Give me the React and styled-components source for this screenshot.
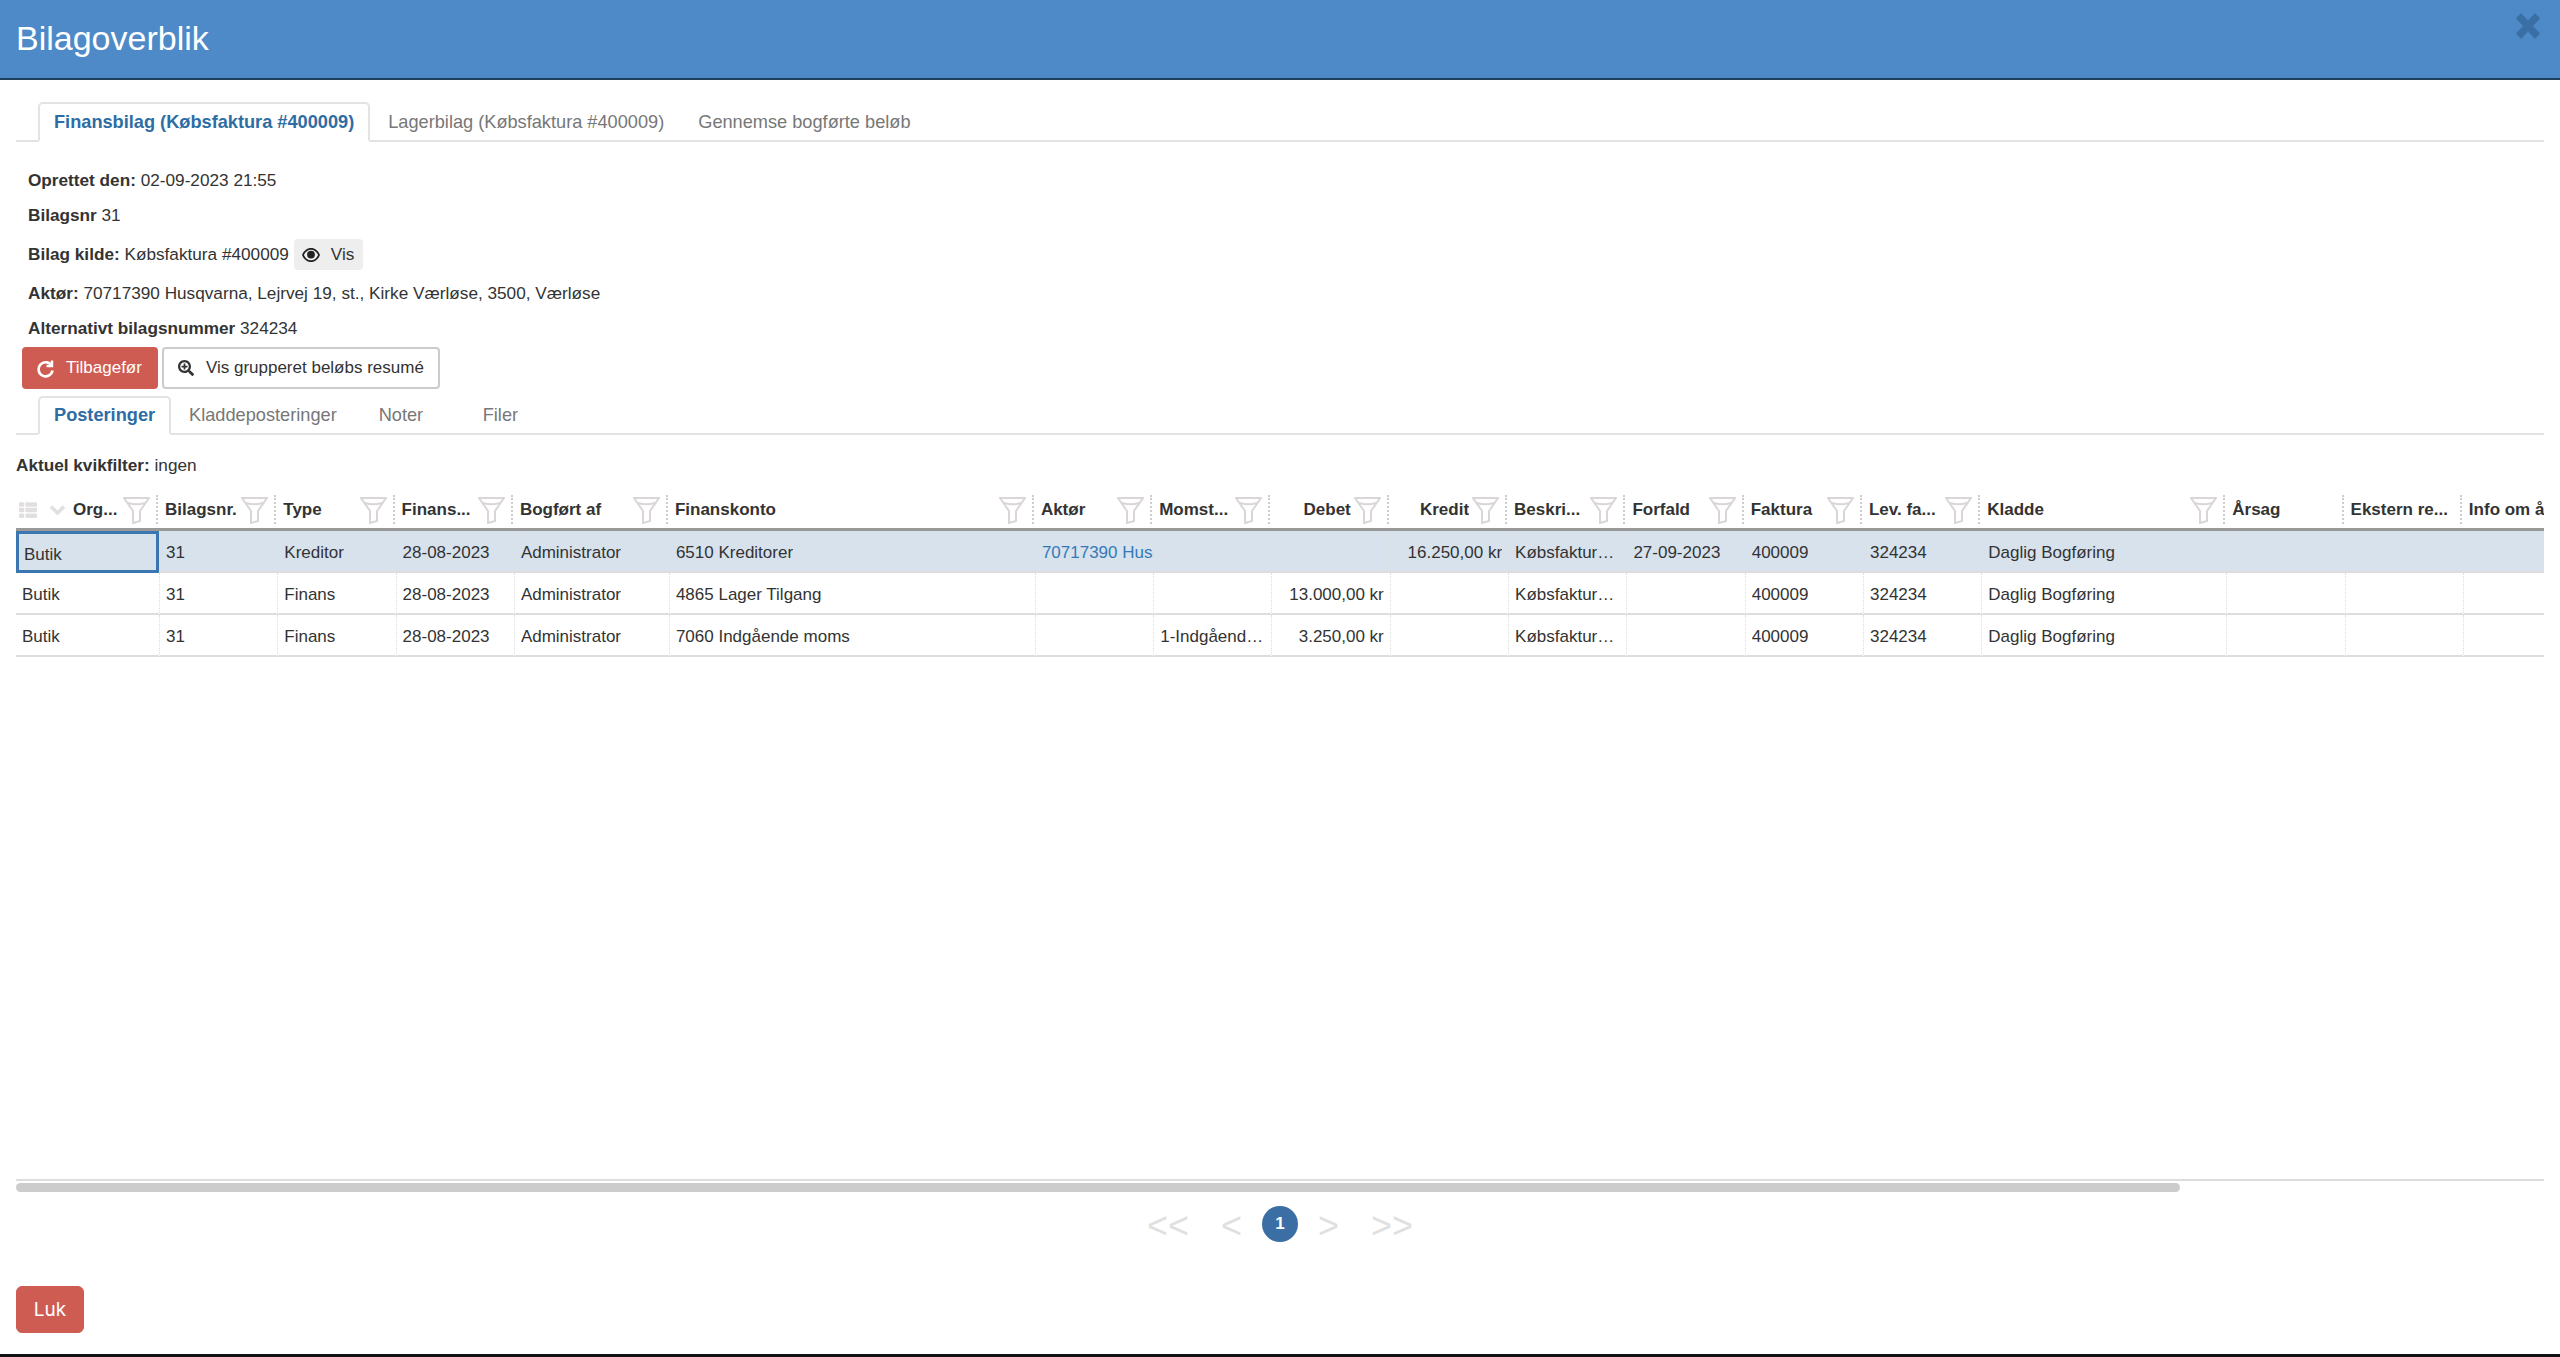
import React from 'react'
import styled, { createGlobalStyle } from 'styled-components'
import { FaSearchPlus, FaThList } from 'react-icons/fa'

const GlobalStyle = createGlobalStyle`
    html, body {
        margin: 0;
        padding: 0;
        background: #fff;
    }
    body {
        font-family: "Liberation Sans", Arial, sans-serif;
        color: #333;
    }
`

const Page = styled.div`
    height: 1357px;
    display: flex;
    flex-direction: column;
    overflow: hidden;
    border-bottom: 3px solid #111;
    box-sizing: border-box;
`

const Header = styled.header`
    height: 78px;
    flex: none;
    background: #4d8ac7;
    border-bottom: 2px solid #1f3f5f;
    display: flex;
    align-items: flex-start;
    justify-content: space-between;
    padding: 0 20px 0 16px;
`

const Title = styled.h1`
    margin: 18px 0 0;
    font-size: 34px;
    line-height: 40px;
    font-weight: 400;
    color: #fff;
`

const CloseIcon = styled.svg`
    width: 24px;
    height: 26px;
    margin-top: 13px;
    fill: #3a6fa6;
`

const Body = styled.main`
    flex: 1;
    min-height: 0;
    display: flex;
    flex-direction: column;
    padding: 0 16px;
`

const Tabs = styled.nav`
    display: flex;
    flex: none;
    height: ${props => props.$height}px;
    margin-top: ${props => props.$top}px;
    padding-left: 22px;
    border-bottom: 2px solid #e3e3e3;
    box-sizing: content-box;
`

const Tab = styled.a`
    display: flex;
    align-items: center;
    box-sizing: border-box;
    padding: 0 14px;
    margin: 0 2px -2px 0;
    font-size: 18.2px;
    color: #777;
    border: 2px solid transparent;
    border-radius: 5px 5px 0 0;
    ${props => props.$wide && `
        min-width: 102px;
        padding: 0 0 0 22px;
    `}
    ${props => props.$active && `
        color: #2e6da4;
        font-weight: 700;
        background: #fff;
        border-color: #e3e3e3;
        border-bottom-color: #fff;
    `}
`

const Info = styled.div`
    display: flex;
    flex-direction: column;
    padding: 21px 0 1px 12px;
    font-size: 17.2px;
`

const InfoRow = styled.div`
    height: ${props => props.$height || 35}px;
    display: flex;
    align-items: center;
    white-space: pre;

    b {
        font-weight: 700;
    }
`

const ViewButton = styled.span`
    display: inline-flex;
    align-items: center;
    gap: 11px;
    height: 31px;
    margin-left: 5px;
    padding: 0 9px 0 8px;
    background: #eee;
    border-radius: 4px;
`

const EyeIcon = styled.svg`
    width: 18px;
    height: 14px;
    fill: #222;
`

const Actions = styled.div`
    display: flex;
    gap: 4px;
    margin: 0 0 0 6px;
    flex: none;
`

const Button = styled.button`
    display: inline-flex;
    align-items: center;
    gap: 12px;
    height: 42px;
    padding: 0 14px 0 ${props => (props.$danger ? 13 : 14)}px;
    font: 400 17px "Liberation Sans", Arial, sans-serif;
    border-radius: 4px;
    color: ${props => (props.$danger ? '#fff' : '#333')};
    background: ${props => (props.$danger ? '#cf5c52' : '#fff')};
    border: 2px solid ${props => (props.$danger ? '#cf5c52' : '#ccc')};
`

const RevertIcon = styled.svg`
    width: 17px;
    height: 19px;
    fill: none;
    stroke: #fff;
    stroke-width: 2.6;
`

const FilterNote = styled.div`
    flex: none;
    height: 56px;
    padding-top: 5px;
    box-sizing: border-box;
    display: flex;
    align-items: center;
    white-space: pre;
    font-size: 17.2px;
`

const GridWrap = styled.div`
    flex: none;
    height: 690px;
    overflow: hidden;
    border-bottom: 2px solid #ddd;
    box-sizing: border-box;
`

const Grid = styled.div`
    display: grid;
    grid-template-columns: ${props => props.$columns};
    width: max-content;
`

const HeadCell = styled.div`
    height: 40px;
    display: flex;
    align-items: center;
    gap: 3px;
    justify-content: ${props => (props.$right ? 'flex-end' : 'flex-start')};
    padding: 0 7px 0 ${props => props.$left || 8}px;
    margin-left: -2px;
    margin-right: 2px;
    min-width: 0;
    box-sizing: border-box;
    border-bottom: 3px solid #999;
    font-size: 17px;
    font-weight: 700;
    color: #333;
    position: relative;

    &::after {
        content: '';
        position: absolute;
        right: -1px;
        top: 4px;
        height: 29px;
        border-right: 2px dotted #ccc;
    }
`

const HeadText = styled.span`
    flex: ${props => (props.$right ? '0 1 auto' : '1 1 0')};
    min-width: 0;
    overflow: hidden;
    white-space: nowrap;
    text-align: ${props => (props.$right ? 'right' : 'left')};
`

const Cell = styled.div`
    height: 42px;
    display: flex;
    align-items: center;
    justify-content: ${props => (props.$right ? 'flex-end' : 'flex-start')};
    padding: 3px ${props => (props.$clip ? 0 : 6)}px 0 6px;
    box-sizing: border-box;
    min-width: 0;
    overflow: hidden;
    font-size: 17px;
    color: #333;
    border-left: ${props => (props.$first ? 'none' : '1px dotted #ddd')};
    border-bottom: 2px solid #ddd;
    background: ${props => (props.$selected ? '#d7e2ed' : '#fff')};

    ${props => props.$focus && `
        border: 3px solid #3a76b0;
        padding: 6px 0 0 5px;
    `}
`

const CellText = styled.span`
    overflow: hidden;
    text-overflow: ${props => (props.$clip ? 'clip' : 'ellipsis')};
    white-space: nowrap;
    color: ${props => (props.$clip ? '#337ab7' : 'inherit')};
`

const Scrollbar = styled.div`
    flex: none;
    height: 9px;
    margin-top: 2px;
`

const ScrollThumb = styled.div`
    height: 100%;
    width: 2164px;
    background: #ccc;
    border-radius: 5px;
`

const Pager = styled.div`
    flex: none;
    display: flex;
    align-items: center;
    justify-content: center;
    height: 42px;
    margin-top: 11px;
    gap: 32px;
    font-size: 36px;
    color: #e0e0e0;
`

const PageLink = styled.span`
    line-height: 42px;
    margin-top: 3px;
`

const PageCurrent = styled.span`
    width: 36px;
    height: 36px;
    border-radius: 50%;
    margin: 0 -12px;
    background: #3a6ea5;
    color: #fff;
    font-size: 17px;
    font-weight: 700;
    display: flex;
    align-items: center;
    justify-content: center;
`

const Footer = styled.footer`
    margin-top: auto;
    flex: none;
    height: 68px;
`

const CloseButton = styled.button`
    width: 68px;
    height: 47px;
    font: 400 19px Inter, "Liberation Sans", sans-serif;
    color: #fff;
    background: #cf5c52;
    border: 1px solid #cf5c52;
    border-radius: 6px;
`

const Funnel = styled.svg`
    flex: none;
    width: 27px;
    height: 28px;
    fill: none;
    stroke: #dbd6d6;
    stroke-width: 2;
`

const ListIcon = styled(FaThList)`
    flex: none;
    color: #e2dfdf;
    font-size: 18px;
    margin-right: 10px;
`

const Chevron = styled.svg`
    flex: none;
    width: 15px;
    height: 10px;
    margin-right: 5px;
    fill: none;
    stroke: #e2dfdf;
    stroke-width: 3.5;
`

const FilterIcon = () => (
    <Funnel viewBox="0 0 27 28">
        <path d="M1 2h25L17 15v10l-7 2V15z" />
        <path d="M5 7c5 1.500 12 1.500 17 0" />
    </Funnel>
)

const columns = [
    { label: 'Org...', width: 143, filter: true },
    { label: 'Bilagsnr.', width: 118.3, filter: true },
    { label: 'Type', width: 118.3, filter: true },
    { label: 'Finans...', width: 118.3, filter: true },
    { label: 'Bogført af', width: 155, filter: true },
    { label: 'Finanskonto', width: 366, filter: true },
    { label: 'Aktør', width: 118.3, filter: true },
    { label: 'Momst...', width: 118.3, filter: true },
    { label: 'Debet', width: 118.3, filter: true, right: true },
    { label: 'Kredit', width: 118.3, filter: true, right: true },
    { label: 'Beskri...', width: 118.3, filter: true },
    { label: 'Forfald', width: 118.3, filter: true },
    { label: 'Faktura', width: 118.3, filter: true },
    { label: 'Lev. fa...', width: 118.3, filter: true },
    { label: 'Kladde', width: 245, filter: true },
    { label: 'Årsag', width: 118.3 },
    { label: 'Ekstern re...', width: 118.3 },
    { label: 'Info om årsag', width: 118.3 },
]

const rows = [
    ['Butik', '31', 'Kreditor', '28-08-2023', 'Administrator', '6510 Kreditorer', '70717390 Husqvarna', '', '', '16.250,00 kr', 'Købsfaktura #400009', '27-09-2023', '400009', '324234', 'Daglig Bogføring', '', '', ''],
    ['Butik', '31', 'Finans', '28-08-2023', 'Administrator', '4865 Lager Tilgang', '', '', '13.000,00 kr', '', 'Købsfaktura #400009', '', '400009', '324234', 'Daglig Bogføring', '', '', ''],
    ['Butik', '31', 'Finans', '28-08-2023', 'Administrator', '7060 Indgående moms', '', '1-Indgående moms', '3.250,00 kr', '', 'Købsfaktura #400009', '', '400009', '324234', 'Daglig Bogføring', '', '', ''],
]

const gridColumns = columns.map(col => `${col.width}px`).join(' ')

function App() {
    return (
        <Page>
            <GlobalStyle />
            <Header>
                <Title>Bilagoverblik</Title>
                <CloseIcon viewBox="0 0 24 26">
                    <path d="M5 0l7 7.500L19 0l5 5.500-7 7.500 7 7.500-5 5.500-7-7.500L5 26l-5-5.500L7 13 0 5.500z" />
                </CloseIcon>
            </Header>
            <Body>
                <Tabs $height={38} $top={22}>
                    <Tab $active>Finansbilag (Købsfaktura #400009)</Tab>
                    <Tab>Lagerbilag (Købsfaktura #400009)</Tab>
                    <Tab>Gennemse bogførte beløb</Tab>
                </Tabs>
                <Info>
                    <InfoRow><b>Oprettet den: </b>02-09-2023 21:55</InfoRow>
                    <InfoRow><b>Bilagsnr </b>31</InfoRow>
                    <InfoRow $height={43}>
                        <b>Bilag kilde: </b>Købsfaktura #400009
                        <ViewButton>
                            <EyeIcon viewBox="0 0 18 14">
                                <path fillRule="evenodd" d="M9 0c4 0 7.300 2.700 9 7-1.700 4.300-5 7-9 7s-7.300-2.700-9-7c1.700-4.300 5-7 9-7zM9 1.700C6 1.700 3.400 3.700 1.900 7c1.500 3.300 4.100 5.300 7.100 5.300s5.600-2 7.100-5.300C14.600 3.700 12 1.700 9 1.700z" />
                                <circle cx="9" cy="6.600" r="3.900" />
                            </EyeIcon>
                            Vis
                        </ViewButton>
                    </InfoRow>
                    <InfoRow><b>Aktør: </b>70717390 Husqvarna, Lejrvej 19, st., Kirke Værløse, 3500, Værløse</InfoRow>
                    <InfoRow><b>Alternativt bilagsnummer </b>324234</InfoRow>
                </Info>
                <Actions>
                    <Button $danger>
                        <RevertIcon viewBox="0 0 17 19">
                            <path d="M14.500 6.500A7 7 0 1 0 15.500 11.500" />
                            <path d="M15 1.500v5.500H9.500" strokeWidth="2.400" />
                        </RevertIcon>
                        Tilbagefør
                    </Button>
                    <Button><FaSearchPlus size={16} />Vis grupperet beløbs resumé</Button>
                </Actions>
                <Tabs $height={37} $top={7}>
                    <Tab $active>Posteringer</Tab>
                    <Tab>Kladdeposteringer</Tab>
                    <Tab $wide>Noter</Tab>
                    <Tab $wide>Filer</Tab>
                </Tabs>
                <FilterNote><b>Aktuel kvikfilter: </b>ingen</FilterNote>
                <GridWrap>
                    <Grid $columns={gridColumns}>
                        {columns.map((col, i) => (
                            <HeadCell key={col.label} $right={col.right} $left={i === 0 ? 5 : 8}>
                                {i === 0 && <ListIcon />}
                                {i === 0 && (
                                    <Chevron viewBox="0 0 15 10">
                                        <path d="M1 1.500l6.500 6.500L14 1.500" />
                                    </Chevron>
                                )}
                                <HeadText $right={col.right}>{col.label}</HeadText>
                                {col.filter && <FilterIcon />}
                            </HeadCell>
                        ))}
                        {rows.map((row, r) =>
                            row.map((value, c) => (
                                <Cell
                                    key={`${r}-${c}`}
                                    $first={c === 0}
                                    $right={columns[c].right}
                                    $selected={r === 0}
                                    $focus={r === 0 && c === 0}
                                    $clip={c === 6}
                                >
                                    <CellText $clip={c === 6}>{value}</CellText>
                                </Cell>
                            ))
                        )}
                    </Grid>
                </GridWrap>
                <Scrollbar><ScrollThumb /></Scrollbar>
                <Pager>
                    <PageLink>&lt;&lt;</PageLink>
                    <PageLink>&lt;</PageLink>
                    <PageCurrent>1</PageCurrent>
                    <PageLink>&gt;</PageLink>
                    <PageLink>&gt;&gt;</PageLink>
                </Pager>
                <Footer><CloseButton>Luk</CloseButton></Footer>
            </Body>
        </Page>
    )
}

export default App
